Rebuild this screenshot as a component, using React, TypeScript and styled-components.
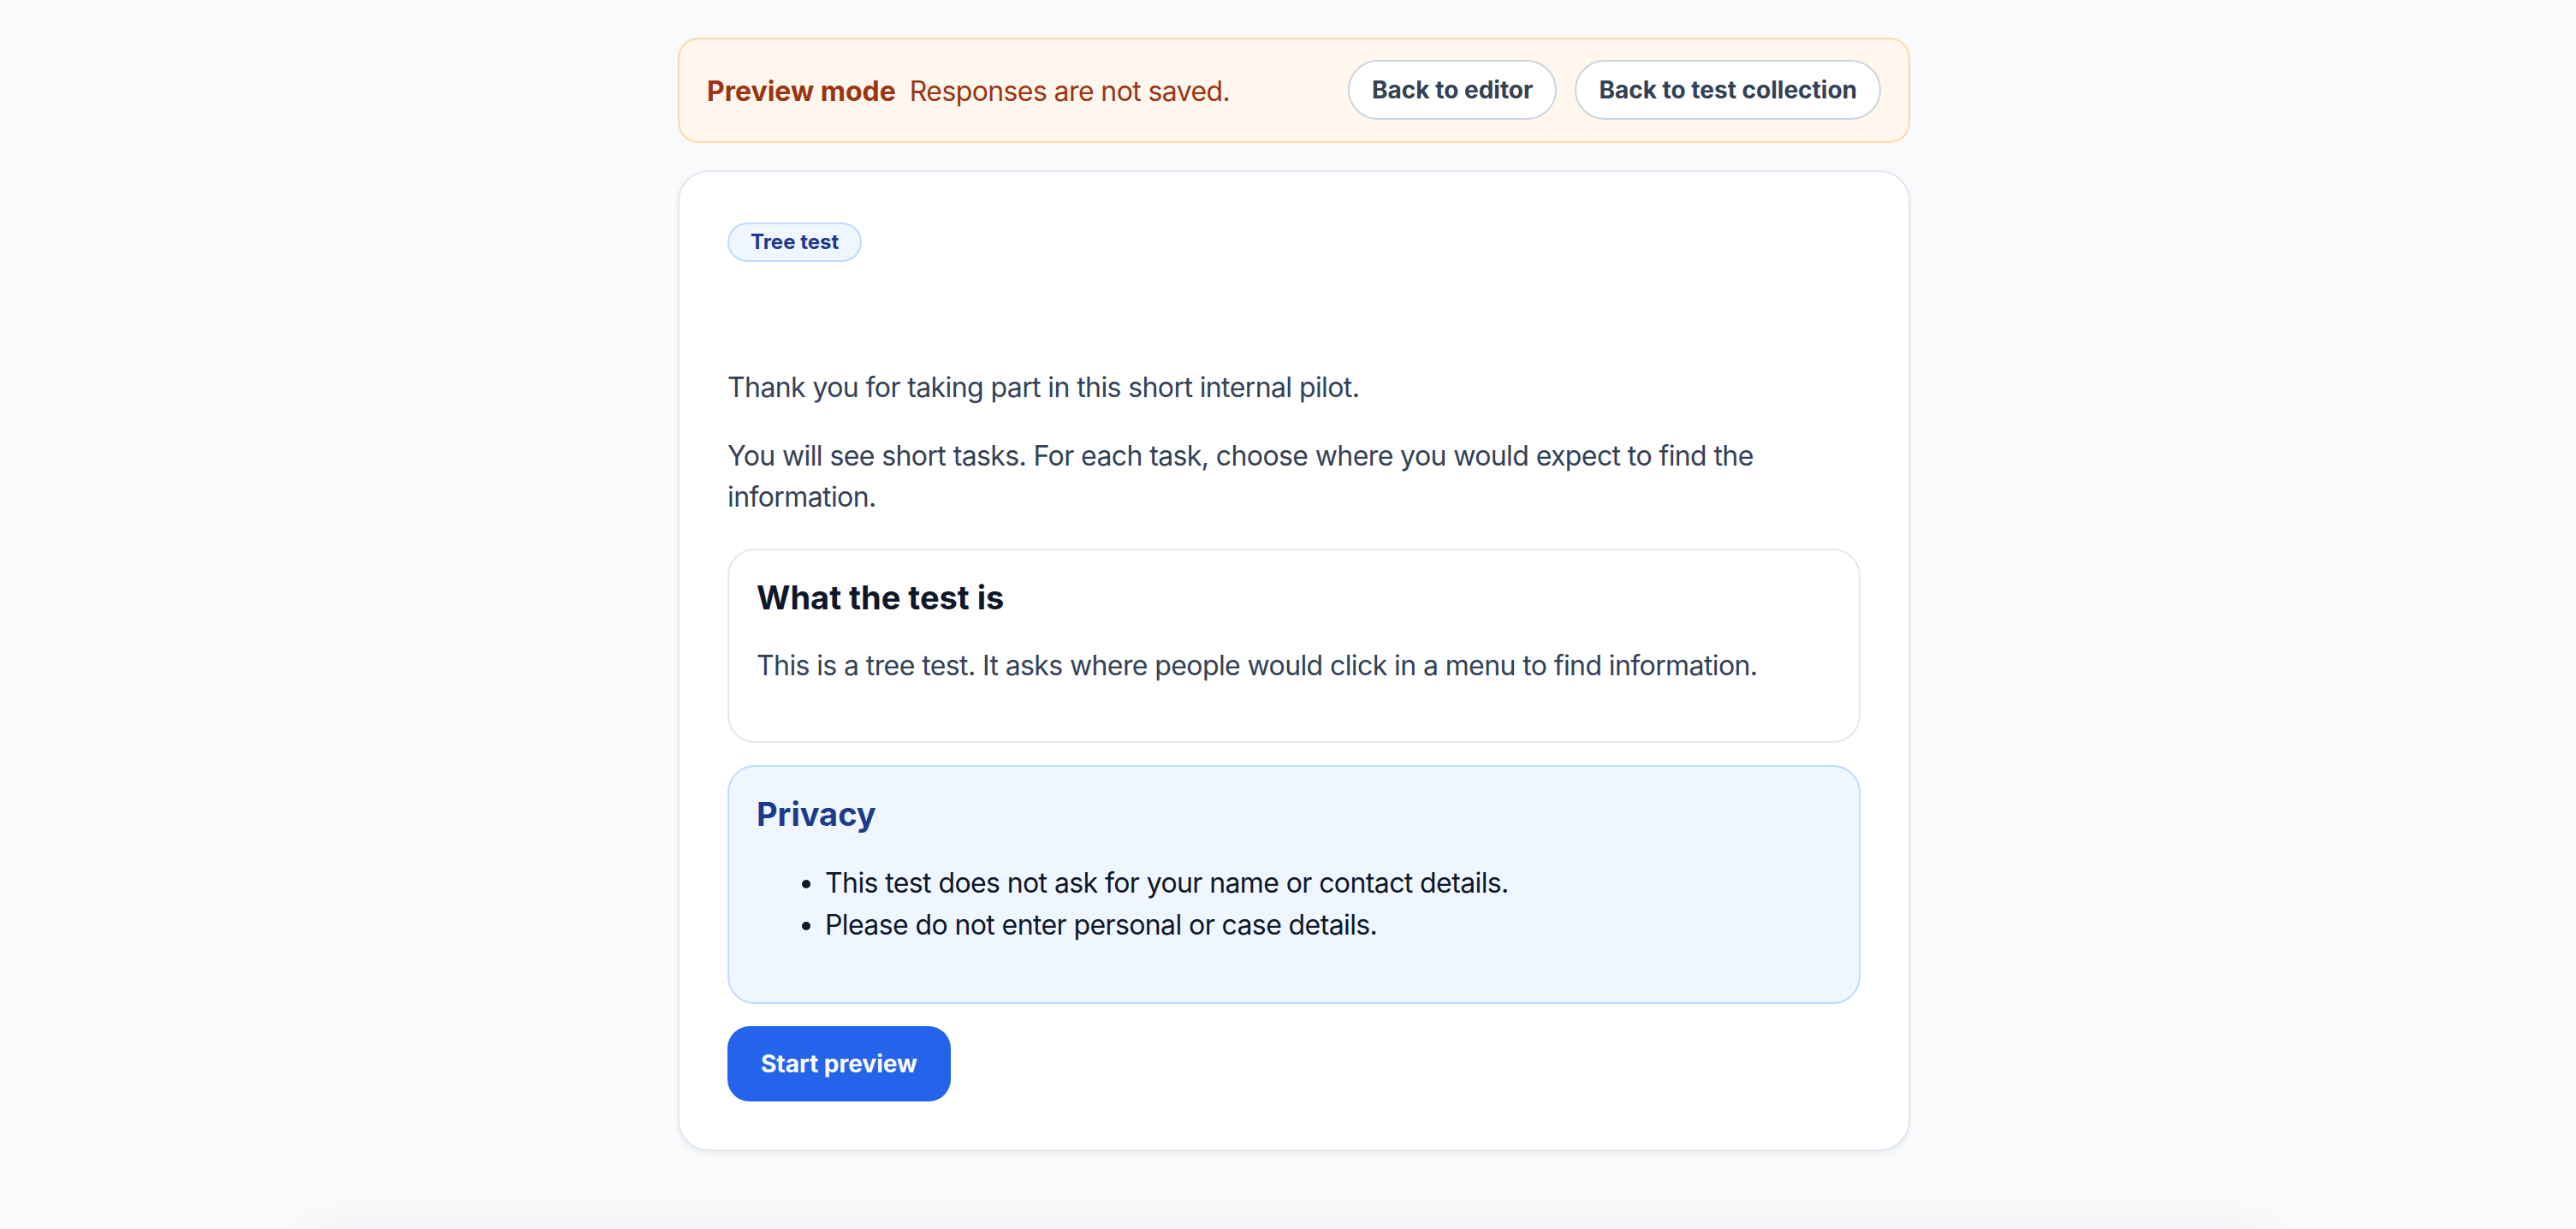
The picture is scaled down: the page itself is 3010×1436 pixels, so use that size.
import React from 'react';
import styled, { createGlobalStyle } from 'styled-components';

const GlobalStyle = createGlobalStyle`
  html, body {
    margin: 0;
    padding: 0;
    background: #f8fafc;
  }
  body {
    font-family: Inter, "Noto Sans", "Liberation Sans", sans-serif;
    color: #334155;
    -webkit-font-smoothing: antialiased;
  }
  * {
    box-sizing: border-box;
  }
`;

const App: React.FC = () => {
  return (
    <>
      <GlobalStyle />
      <Page>
        <Column>
          <Banner>
            <BannerMessage>
              <strong>Preview mode</strong>
              <span>Responses are not saved.</span>
            </BannerMessage>
            <BannerActions>
              <GhostButton type="button">Back to editor</GhostButton>
              <GhostButton type="button">Back to test collection</GhostButton>
            </BannerActions>
          </Banner>

          <Card>
            <Tag>Tree test</Tag>

            <Intro>Thank you for taking part in this short internal pilot.</Intro>
            <Intro>
              You will see short tasks. For each task, choose where you would expect to find the
              information.
            </Intro>

            <InfoBox>
              <InfoTitle>What the test is</InfoTitle>
              <InfoText>
                This is a tree test. It asks where people would click in a menu to find information.
              </InfoText>
            </InfoBox>

            <InfoBox $tone="blue">
              <InfoTitle $tone="blue">Privacy</InfoTitle>
              <BulletList>
                <li>This test does not ask for your name or contact details.</li>
                <li>Please do not enter personal or case details.</li>
              </BulletList>
            </InfoBox>

            <PrimaryButton type="button">Start preview</PrimaryButton>
          </Card>
        </Column>
      </Page>
      <BottomGlow />
    </>
  );
};

export default App;

const bodyText = {
  fontSize: '32px',
  lineHeight: '48px',
  letterSpacing: '-0.6px',
};

const Page = styled('main')({
  minHeight: '100vh',
  padding: '44px 0 60px 14px',
});

const Column = styled('div')({
  width: '1440px',
  margin: '0 auto',
  display: 'flex',
  flexDirection: 'column',
  gap: '32px',
});

const Banner = styled('div')({
  display: 'flex',
  alignItems: 'center',
  justifyContent: 'space-between',
  padding: '24px 32px 25px',
  background: '#fff7ed',
  border: '2px solid #fed7aa',
  borderRadius: '24px',
});

const BannerMessage = styled('p')({
  ...bodyText,
  margin: 0,
  paddingTop: '3px',
  display: 'flex',
  alignItems: 'baseline',
  gap: '16px',
  color: '#9a3412',
  strong: {
    fontWeight: 700,
    letterSpacing: 0,
  },
});

const BannerActions = styled('div')({
  display: 'flex',
  gap: '21px',
});

const GhostButton = styled('button')({
  height: '70px',
  padding: '0 26px',
  background: '#ffffff',
  border: '2px solid #cbd5e1',
  borderRadius: '999px',
  fontFamily: 'inherit',
  fontSize: '28px',
  fontWeight: 700,
  color: '#334155',
  cursor: 'pointer',
});

const Card = styled('section')({
  display: 'flex',
  flexDirection: 'column',
  alignItems: 'flex-start',
  padding: '56px',
  background: '#ffffff',
  border: '2px solid #e2e8f0',
  borderRadius: '36px',
  boxShadow: '0 3px 6px rgba(15, 23, 42, 0.06)',
});

const Tag = styled('span')({
  display: 'inline-block',
  padding: '6px 25px',
  margin: '3px 0 123px',
  lineHeight: '30px',
  fontSize: '24px',
  fontWeight: 700,
  color: '#1e3a8a',
  background: '#eff6ff',
  border: '2px solid #bfdbfe',
  borderRadius: '999px',
});

const Intro = styled('p')({
  ...bodyText,
  margin: '0 0 32px',
  color: '#334155',
  '& + &': {
    marginBottom: '36px',
  },
});

const InfoBox = styled('div')<{ $tone?: 'blue' }>(({ $tone }) => ({
  alignSelf: 'stretch',
  marginBottom: '26px',
  padding: '32px',
  background: $tone === 'blue' ? '#eff6ff' : '#ffffff',
  border: `2px solid ${$tone === 'blue' ? '#bfdbfe' : '#e2e8f0'}`,
  borderRadius: '32px',
}));

const InfoTitle = styled('h2')<{ $tone?: 'blue' }>(({ $tone }) => ({
  margin: 0,
  fontSize: '38px',
  lineHeight: '47px',
  fontWeight: 700,
  color: $tone === 'blue' ? '#1e3a8a' : '#0f172a',
}));

const InfoText = styled('p')({
  ...bodyText,
  margin: '32px 0',
  color: '#334155',
});

const BulletList = styled('ul')({
  ...bodyText,
  margin: '32px 0 34px',
  paddingLeft: '80px',
  lineHeight: '49px',
  color: '#0f172a',
});

const PrimaryButton = styled('button')({
  height: '88px',
  padding: '0 39px',
  background: '#2563eb',
  border: 'none',
  borderRadius: '26px',
  fontFamily: 'inherit',
  fontSize: '28px',
  fontWeight: 700,
  color: '#ffffff',
  cursor: 'pointer',
});

const BottomGlow = styled('div')({
  position: 'fixed',
  left: '50%',
  bottom: '-70px',
  width: '2300px',
  height: '60px',
  transform: 'translateX(-50%)',
  borderRadius: '40px',
  background: '#f8fafc',
  boxShadow: '0 0 60px rgba(15, 23, 42, 0.07)',
  pointerEvents: 'none',
});
